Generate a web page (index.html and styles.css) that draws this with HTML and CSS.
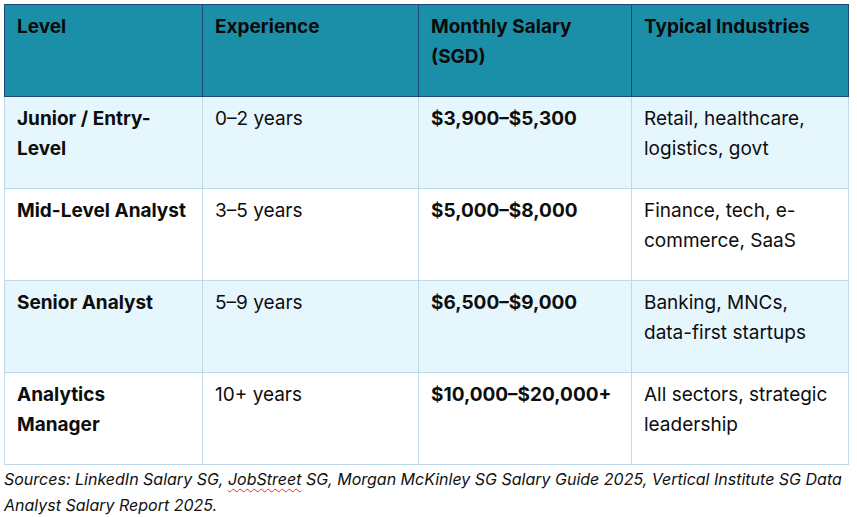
FILE: index.html
```html
<!DOCTYPE html>
<html>
<head>
<meta charset="utf-8">
<link rel="stylesheet" href="styles.css">
</head>
<body>
<table class="salary">
  <colgroup>
    <col class="c1"><col class="c2"><col class="c3"><col class="c4">
  </colgroup>
  <thead>
    <tr>
      <th>Level</th>
      <th>Experience</th>
      <th>Monthly Salary<br>(SGD)</th>
      <th>Typical Industries</th>
    </tr>
  </thead>
  <tbody>
    <tr class="alt">
      <td class="b">Junior / Entry-<br>Level</td>
      <td>0–2 years</td>
      <td class="b">$3,900–$5,300</td>
      <td>Retail, healthcare,<br>logistics, govt</td>
    </tr>
    <tr>
      <td class="b">Mid-Level Analyst</td>
      <td>3–5 years</td>
      <td class="b">$5,000–$8,000</td>
      <td>Finance, tech, e-<br>commerce, SaaS</td>
    </tr>
    <tr class="alt">
      <td class="b">Senior Analyst</td>
      <td>5–9 years</td>
      <td class="b">$6,500–$9,000</td>
      <td>Banking, MNCs,<br>data-first startups</td>
    </tr>
    <tr>
      <td class="b">Analytics<br>Manager</td>
      <td>10+ years</td>
      <td class="b">$10,000–$20,000+</td>
      <td>All sectors, strategic<br>leadership</td>
    </tr>
  </tbody>
</table>
<p class="sources">Sources: LinkedIn Salary SG, <span class="spell">JobStreet</span> SG, Morgan McKinley SG Salary Guide 2025, Vertical Institute SG Data<br>Analyst Salary Report 2025.</p>
</body>
</html>
```
FILE: styles.css
```css
html, body {
  margin: 0;
  padding: 0;
  background: #ffffff;
}
body {
  padding: 4px 0 0 4px;
  font-family: Inter, "Noto Sans", sans-serif;
  color: #111111;
}
.salary {
  border-collapse: collapse;
  table-layout: fixed;
  width: 844px;
  font-size: 19px;
  line-height: 30px;
}
.c1 { width: 198px; }
.c2 { width: 216px; }
.c3 { width: 213px; }
.c4 { width: 217px; }
.salary th,
.salary td {
  height: 92px;
  box-sizing: border-box;
  padding: 7px 8px 0 12px;
  vertical-align: top;
  text-align: left;
  white-space: nowrap;
}
.salary th {
  background: #1b8fa8;
  color: #0a0a0a;
  font-weight: 700;
  border: 1px solid #1f4a78;
}
.salary td {
  border: 1px solid #bfd8ea;
  color: #0d0d0d;
}
.salary tr.alt td {
  background: #e6f6fd;
}
.salary td.b {
  font-weight: 700;
}
.sources {
  margin: 0;
  padding-top: 1px;
  font-style: italic;
  font-size: 16px;
  line-height: 26px;
  color: #111111;
}
.spell {
  text-decoration: underline wavy #e03030;
  text-decoration-thickness: 1px;
  text-underline-offset: 3px;
}
```
